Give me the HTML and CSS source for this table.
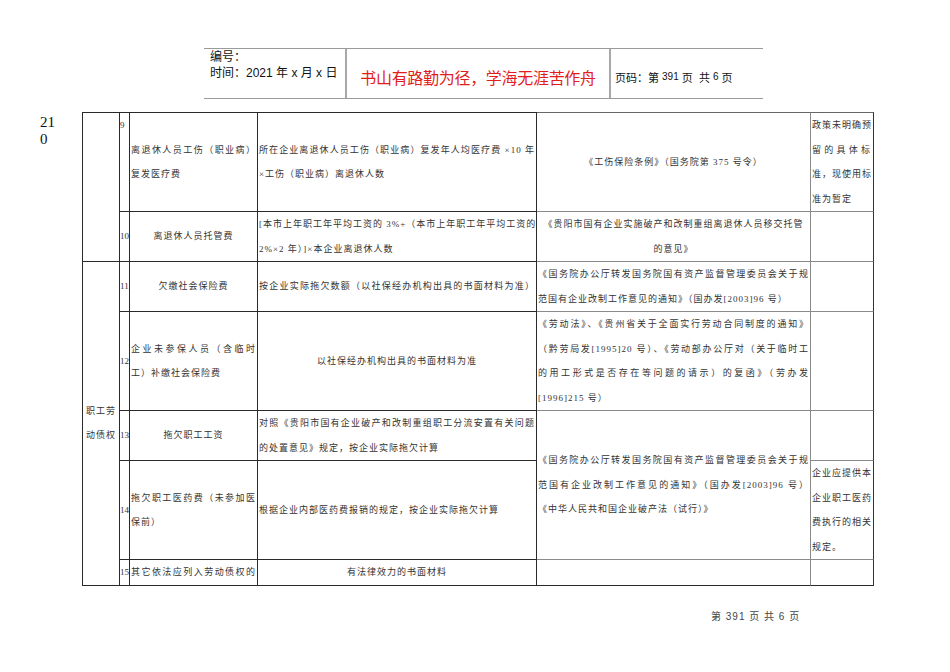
FILE: index.html
```html
<!DOCTYPE html>
<html lang="zh-CN">
<head>
<meta charset="utf-8">
<title>债权表</title>
<link rel="stylesheet" href="styles.css">
</head>
<body>
<div class="page">
  <div class="hdr">
    <div class="hdr-left">
      <div>编号：</div>
      <div>时间：<span class="num">2021</span> 年 x 月 x 日</div>
    </div>
    <div class="hdr-mid">书山有路勤为径，学海无涯苦作舟</div>
    <div class="hdr-right">页码：第 <span class="num sm">391</span> 页&nbsp; 共 <span class="num sm">6</span> 页</div>
  </div>

  <div class="main">
    <div class="side">21<br>0</div>
    <table class="tbl">
      <colgroup>
        <col class="w1"><col class="w2"><col class="w3"><col class="w4"><col class="w5"><col class="w6">
      </colgroup>
      <tr class="r9">
        <td class="c1 top" rowspan="2"></td>
        <td class="c2 vtop">9</td>
        <td class="c3"><span class="ln j">离退休人员工伤（职业病）</span><span class="ln">复发医疗费</span></td>
        <td class="c4"><span class="ln j">所在企业离退休人员工伤（职业病）复发年人均医疗费 ×10 年</span><span class="ln">×工伤（职业病）离退休人数</span></td>
        <td class="c5 mid">《工伤保险条例》（国务院第 375 号令）</td>
        <td class="c6"><span class="ln j">政策未明确预</span><span class="ln j">留的具体标</span><span class="ln j">准，现使用标</span><span class="ln">准为暂定</span></td>
      </tr>
      <tr class="r10">
        <td class="c2">10</td>
        <td class="c3 mid">离退休人员托管费</td>
        <td class="c4"><span class="ln j">[本市上年职工年平均工资的 3%+（本市上年职工年平均工资的</span><span class="ln">2%×2 年）]×本企业离退休人数</span></td>
        <td class="c5 mid"><span class="ln">《贵阳市国有企业实施破产和改制重组离退休人员移交托管</span><span class="ln">的意见》</span></td>
        <td class="c6"></td>
      </tr>
      <tr class="r11">
        <td class="c1 mid" rowspan="5"><span class="ln">职工劳</span><span class="ln">动债权</span></td>
        <td class="c2">11</td>
        <td class="c3 mid">欠缴社会保险费</td>
        <td class="c4"><span class="ln j">按企业实际拖欠数额（以社保经办机构出具的书面材料为准）</span></td>
        <td class="c5"><span class="ln j">《国务院办公厅转发国务院国有资产监督管理委员会关于规</span><span class="ln">范国有企业改制工作意见的通知》（国办发[2003]96 号）</span></td>
        <td class="c6"></td>
      </tr>
      <tr class="r12">
        <td class="c2">12</td>
        <td class="c3"><span class="ln j">企业未参保人员（含临时</span><span class="ln">工）补缴社会保险费</span></td>
        <td class="c4 mid">以社保经办机构出具的书面材料为准</td>
        <td class="c5"><span class="ln j">《劳动法》、《贵州省关于全面实行劳动合同制度的通知》</span><span class="ln j">（黔劳局发[1995]20 号）、《劳动部办公厅对（关于临时工</span><span class="ln j">的用工形式是否存在等问题的请示）的复函》（劳办发</span><span class="ln">[1996]215 号）</span></td>
        <td class="c6"></td>
      </tr>
      <tr class="r13">
        <td class="c2">13</td>
        <td class="c3 mid">拖欠职工工资</td>
        <td class="c4"><span class="ln j">对照《贵阳市国有企业破产和改制重组职工分流安置有关问题</span><span class="ln">的处置意见》规定，按企业实际拖欠计算</span></td>
        <td class="c5" rowspan="2"><span class="ln j">《国务院办公厅转发国务院国有资产监督管理委员会关于规</span><span class="ln j">范国有企业改制工作意见的通知》（国办发[2003]96 号）</span><span class="ln">《中华人民共和国企业破产法（试行）》</span></td>
        <td class="c6"></td>
      </tr>
      <tr class="r14">
        <td class="c2">14</td>
        <td class="c3"><span class="ln j">拖欠职工医药费（未参加医</span><span class="ln">保前）</span></td>
        <td class="c4">根据企业内部医药费报销的规定，按企业实际拖欠计算</td>
        <td class="c6"><span class="ln j">企业应提供本</span><span class="ln j">企业职工医药</span><span class="ln j">费执行的相关</span><span class="ln">规定。</span></td>
      </tr>
      <tr class="r15 last">
        <td class="c2">15</td>
        <td class="c3"><span class="ln j">其它依法应列入劳动债权的</span></td>
        <td class="c4 mid">有法律效力的书面材料</td>
        <td class="c5"></td>
        <td class="c6"></td>
      </tr>
    </table>
  </div>

  <div class="foot">第 <span class="num">391</span> 页 共 <span class="num">6</span> 页</div>
</div>
</body>
</html>
```

FILE: styles.css
```css
* { box-sizing: border-box; }
html, body { margin: 0; padding: 0; background: #fff; }
body {
  width: 950px;
  height: 672px;
  overflow: hidden;
  font-family: "Liberation Sans", "Noto Sans CJK SC", sans-serif;
  color: #111;
}
.page { padding-top: 48px; }

/* header */
.hdr {
  margin-left: 204px;
  width: 559px;
  height: 51px;
  display: flex;
  border-top: 1px solid #9a9a9a;
  border-bottom: 1px solid #9a9a9a;
}
.hdr-left {
  width: 141px;
  padding: 0 0 0 6px;
  font-size: 12px;
  line-height: 16px;
  color: #111;
}
.hdr-mid {
  width: 266px;
  border-left: 2px solid #a8a8a8;
  border-right: 2px solid #a8a8a8;
  display: flex;
  align-items: center;
  justify-content: center;
  padding-top: 6px;
  font-size: 16px;
  letter-spacing: -0.3px;
  color: #e11d1d;
}
.hdr-right {
  flex: 1;
  display: flex;
  align-items: center;
  padding: 6px 0 0 4px;
  font-size: 11px;
  color: #111;
  white-space: pre;
}
.num { font-family: "Liberation Sans", sans-serif; }
.sm { font-size: 10px; }

/* main */
.main {
  display: flex;
  margin-top: 13px;
  padding-left: 40px;
}
.side {
  width: 42px;
  padding-top: 2px;
  font-family: "Liberation Serif", serif;
  font-size: 15px;
  line-height: 17px;
  color: #111;
}
.tbl {
  border-collapse: separate;
  border-spacing: 0;
  table-layout: fixed;
  width: 792px;
  font-family: "Liberation Serif", "Noto Sans CJK SC", serif;
  font-size: 9px;
  letter-spacing: 1px;
  line-height: 24.5px;
  color: #333;
}
.w1 { width: 38px; }
.w2 { width: 10px; }
.w3 { width: 128px; }
.w4 { width: 279px; }
.w5 { width: 274px; }
.w6 { width: 63px; }

.tbl td {
  padding: 0 1px;
  vertical-align: middle;
  text-align: left;
  white-space: nowrap;
  overflow: hidden;
  border-right: 1px solid #2a2a2a;
  border-bottom: 1px solid #2a2a2a;
}
.tbl tr.r9 td { border-top: 1px solid #2a2a2a; }
.tbl td.c1 { border-left: 1px solid #2a2a2a; text-align: center; padding: 0 2px; }
.tbl td.c2 { padding: 0; letter-spacing: 0; }
.tbl td.c2.vtop { vertical-align: top; }
.tbl td.c5 { border-right-color: #8a8a8a; border-bottom-color: #8a8a8a; }
.tbl td.c6 { border-bottom-color: #8a8a8a; border-right-color: #333; padding: 0 2px 0 1px; }
.tbl tr.r9 td.c5, .tbl tr.r9 td.c6 { border-top-color: #666; }
.tbl tr.last td { border-bottom-color: #2a2a2a; }
.tbl td.mid { text-align: center; }

.ln { display: block; }
.ln.j { text-align: justify; text-align-last: justify; }

.r9 { height: 100px; }
.r10 { height: 49px; }
.r11 { height: 50px; }
.r12 { height: 98px; }
.r13 { height: 50px; }
.r14 { height: 99px; }
.r15 { height: 25px; }

/* footer */
.foot {
  margin-top: 22px;
  padding-left: 711px;
  font-size: 10px;
  letter-spacing: 1px;
  color: #444;
}
```
